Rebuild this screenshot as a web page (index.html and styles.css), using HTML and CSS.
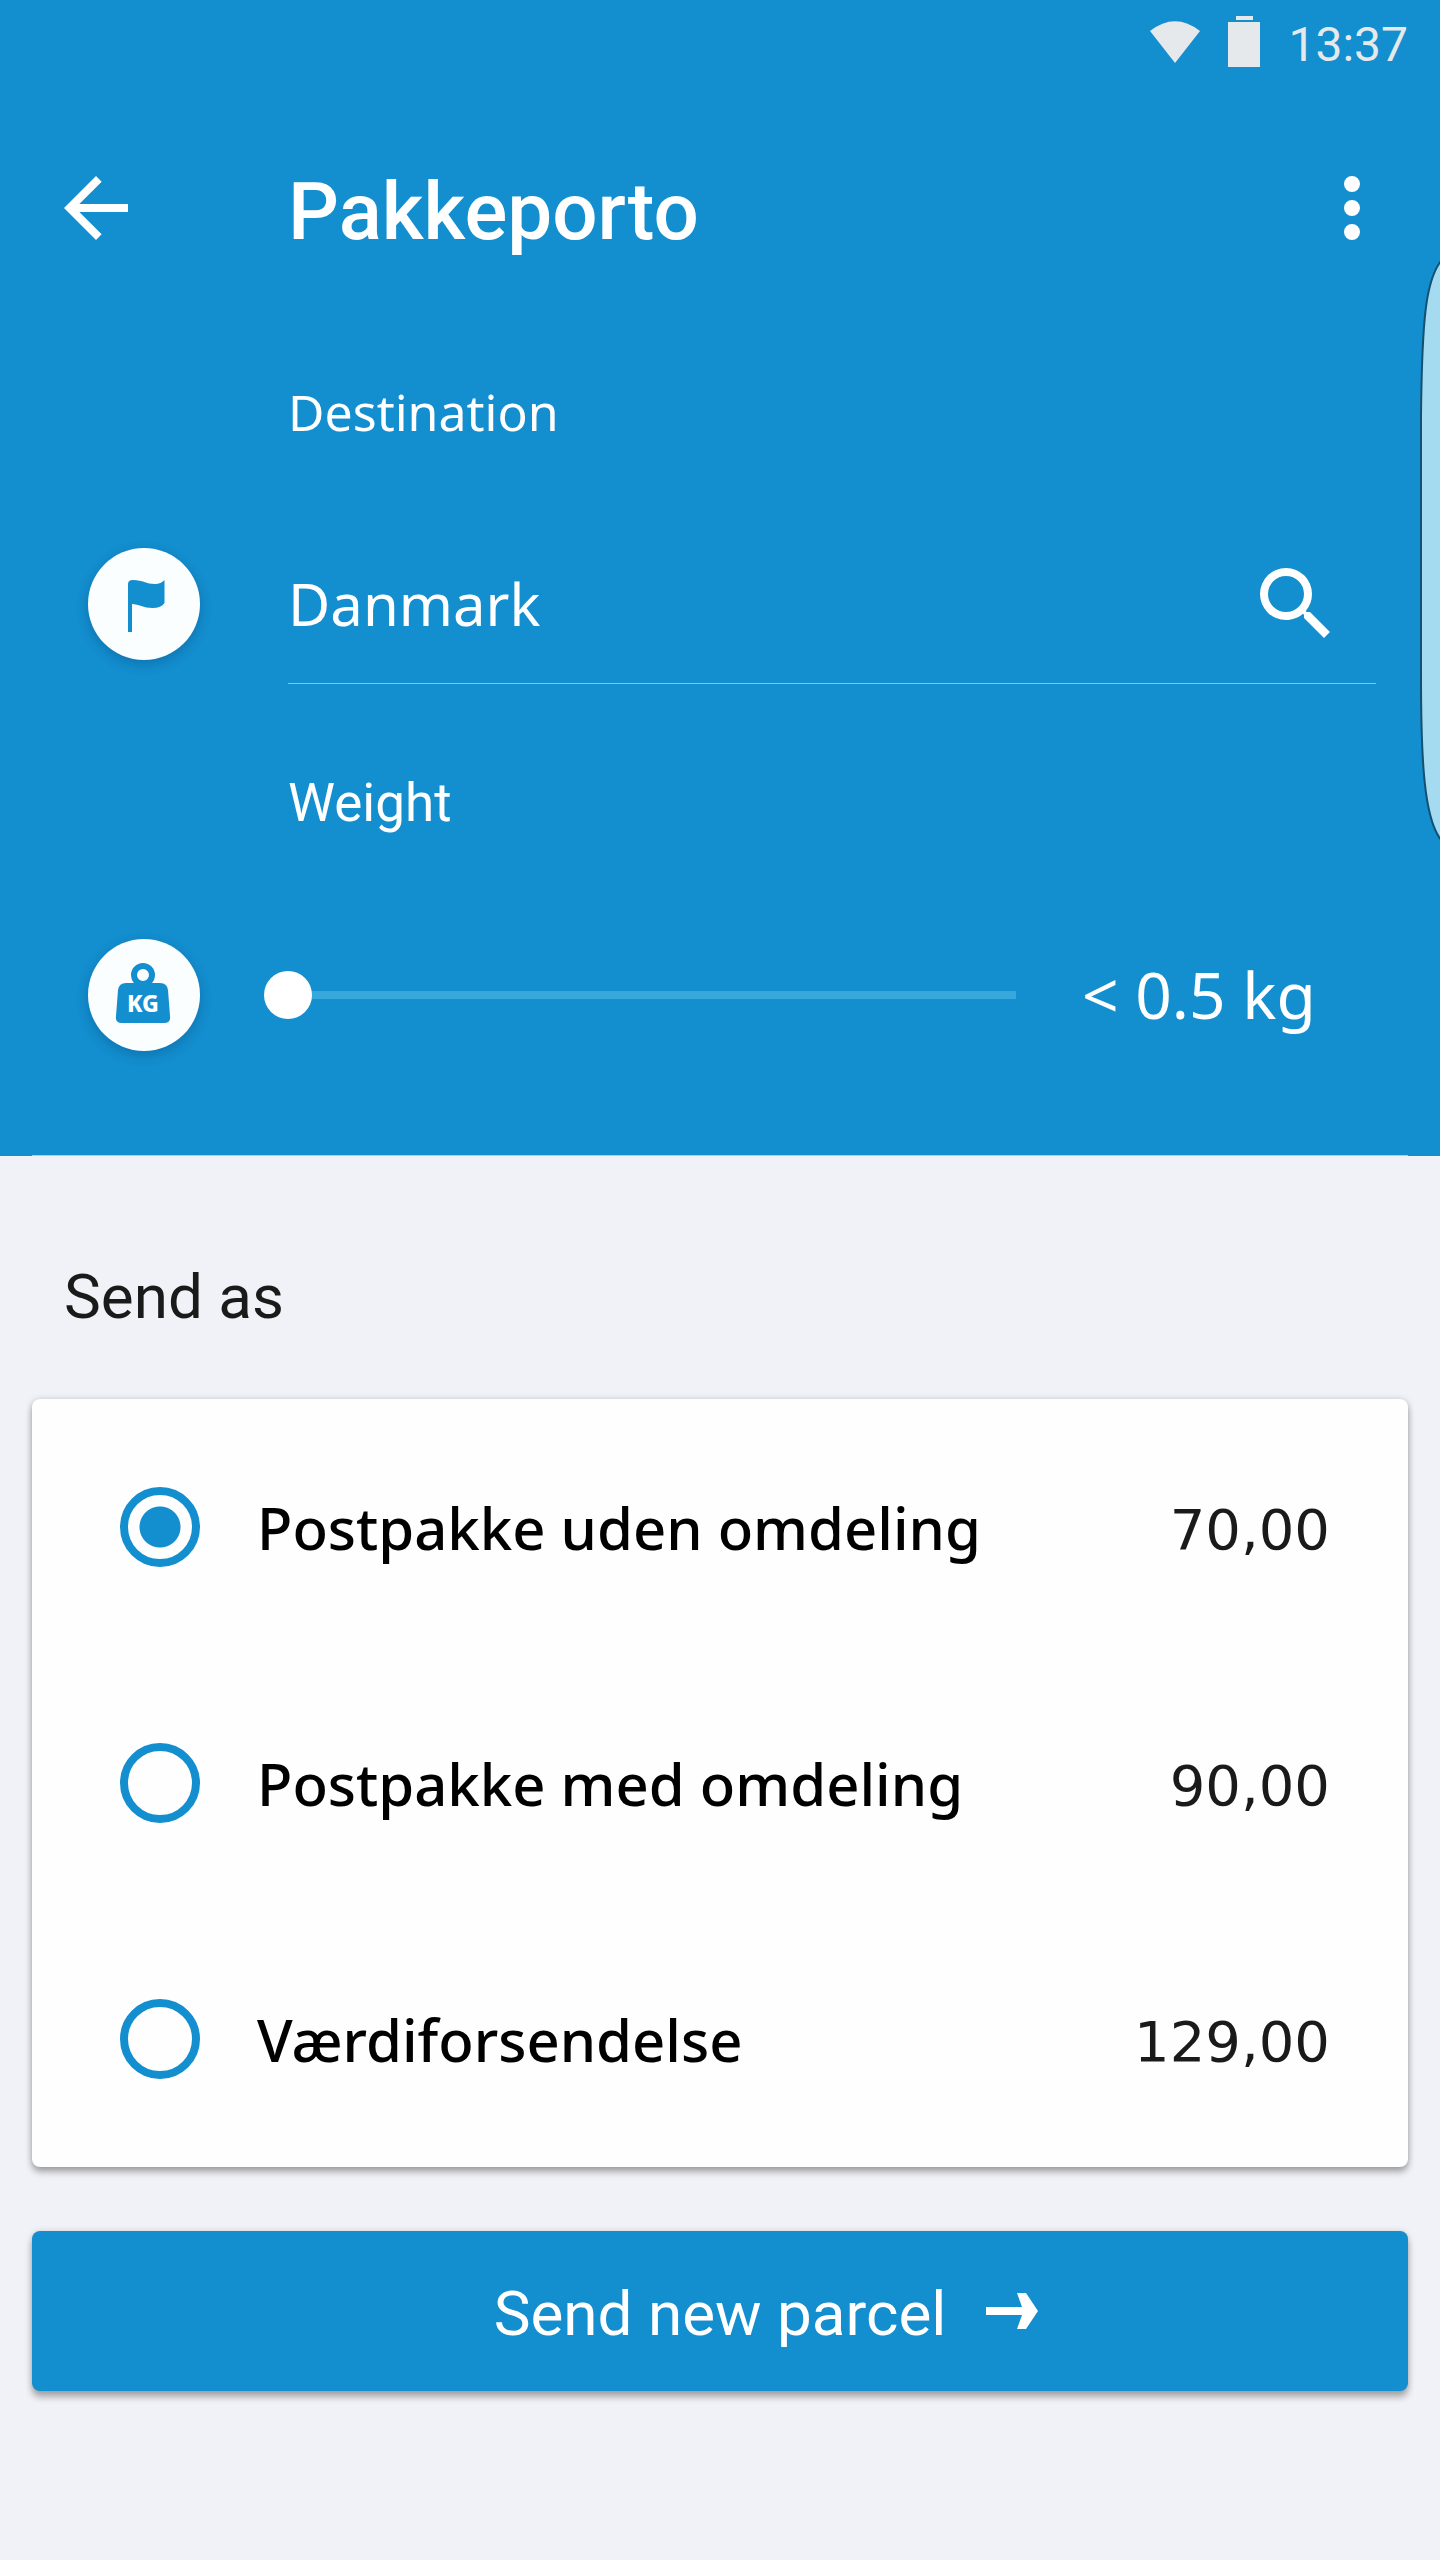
FILE: index.html
```html
<!DOCTYPE html>
<html lang="da">
<head>
  <meta charset="utf-8">
  <meta name="viewport" content="width=device-width, initial-scale=1">
  <title>Pakkeporto</title>
  <link rel="stylesheet" href="styles.css">
</head>
<body>
  <header class="top">
    <div class="status">
      <svg class="wifi" viewBox="0 0 50 42" aria-hidden="true"><path d="M0 10Q25-9.500 50 10L25 42Z"/></svg>
      <svg class="battery" viewBox="0 0 32 52" aria-hidden="true"><path d="M8 0h17v4H8zM0 6h32v45H0z"/></svg>
      <time class="clock">13:37</time>
    </div>

    <div class="appbar">
      <button class="icon-button" type="button" aria-label="Back">
        <svg viewBox="0 0 24 24"><path d="M20 11H7.830l5.590-5.590L12 4l-8 8 8 8 1.410-1.410L7.830 13H20v-2z"/></svg>
      </button>
      <h1 class="title">Pakkeporto</h1>
      <button class="icon-button" type="button" aria-label="More options">
        <svg viewBox="0 0 24 24"><path d="M12 8a2 2 0 1 0 0-4 2 2 0 0 0 0 4zm0 2a2 2 0 1 0 0 4 2 2 0 0 0 0-4zm0 6a2 2 0 1 0 0 4 2 2 0 0 0 0-4z"/></svg>
      </button>
    </div>

    <form class="fields">
      <label class="label label-destination" for="destination">Destination</label>
      <div class="row">
        <span class="badge">
          <svg viewBox="0 0 112 112" aria-hidden="true"><path d="M40 84V36q0-4 5-4c10 0 13 4 22 4q6 0 9.500-4v23q-3 5-12 5c-9 0-14-4-20.500-4v28z"/></svg>
        </span>
        <div class="search">
          <input class="search-input" id="destination" type="text" value="Danmark">
          <button class="icon-button" type="button" aria-label="Search">
            <svg viewBox="0 0 24 24"><path d="M15.500 14h-.79l-.28-.27A6.470 6.470 0 0 0 16 9.500 6.500 6.500 0 1 0 9.500 16c1.610 0 3.090-.59 4.230-1.570l.27.28v.79l5 4.990L20.490 19l-4.990-5zm-6 0a4.500 4.500 0 1 1 0-9 4.500 4.500 0 0 1 0 9z"/></svg>
          </button>
        </div>
      </div>

      <label class="label label-weight" for="weight">Weight</label>
      <div class="row">
        <span class="badge">
          <svg viewBox="0 0 112 112" aria-hidden="true">
            <circle class="ring" cx="55" cy="36" r="9"/>
            <path d="M38 44h34q7 0 8 7l2 26q1 7-6 7H34q-7 0-6-7l2-26q1-7 8-7z"/>
            <text class="kg" x="55" y="73">KG</text>
          </svg>
        </span>
        <input class="slider" id="weight" type="range" min="0" max="20" step="1" value="0">
        <output class="amount" for="weight">&lt; 0.5 kg</output>
      </div>
    </form>

    <svg class="edge-tab" viewBox="0 0 20 588" aria-hidden="true"><path d="M21 5C6 24 2 62 1 160V420C1 505 4 562 21 584"/></svg>
  </header>

  <main class="content">
    <h2 class="heading" id="send-as">Send as</h2>
    <div class="card" role="radiogroup" aria-labelledby="send-as">
      <label class="option">
        <input class="radio" type="radio" name="service" checked>
        <span class="name">Postpakke uden omdeling</span>
        <span class="price">70,00</span>
      </label>
      <label class="option">
        <input class="radio" type="radio" name="service">
        <span class="name">Postpakke med omdeling</span>
        <span class="price">90,00</span>
      </label>
      <label class="option">
        <input class="radio" type="radio" name="service">
        <span class="name">Værdiforsendelse</span>
        <span class="price">129,00</span>
      </label>
    </div>

    <button class="send" type="button">
      <span class="send-text">Send new parcel</span>
      <svg class="send-arrow" viewBox="0 0 52 36" aria-hidden="true"><path d="M0 14H36L31 0H40L52 18 40 36H31L36 22H0Z"/></svg>
    </button>
  </main>
</body>
</html>
```
FILE: styles.css
```css
:root {
  --blue: #138ecf;
  --page: #f1f2f7;
}

* {
  box-sizing: border-box;
}

body {
  margin: 0;
  min-height: 100vh;
  background: var(--page);
  font-family: Roboto, sans-serif;
}

button,
input {
  margin: 0;
  border: 0;
  padding: 0;
  background: none;
  color: inherit;
  font: inherit;
}

/* Header */
.top {
  position: relative;
  padding-bottom: 81px;
  background: var(--blue);
  color: #fff;
}

.top::after {
  content: "";
  position: absolute;
  right: 32px;
  bottom: 0;
  left: 32px;
  height: 1px;
  background: #a0d2ec;
}

.status {
  display: flex;
  align-items: center;
  justify-content: flex-end;
  height: 96px;
  padding: 0 32px 12px;
  color: #e6e9eb;
}

.status svg {
  fill: currentColor;
}

.wifi {
  width: 50px;
  height: 42px;
  margin-right: 28px;
}

.battery {
  width: 32px;
  height: 52px;
  margin-right: 28px;
}

.clock {
  padding-top: 6px;
  font-size: 48px;
  line-height: 56px;
}

.appbar {
  display: flex;
  align-items: center;
  height: 224px;
  padding: 0 40px 0 48px;
}

.icon-button {
  flex: none;
  width: 96px;
  height: 96px;
}

.icon-button svg {
  display: block;
  width: 100%;
  height: 100%;
  fill: currentColor;
}

.title {
  flex: 1;
  margin: 0;
  padding: 8px 0 0 144px;
  font-size: 80px;
  font-weight: 500;
  line-height: 96px;
}

.label {
  display: block;
  margin: 0 0 80px 288px;
  line-height: 64px;
}

.label-destination {
  padding-top: 60px;
  font-family: "Noto Sans", sans-serif;
  font-size: 50px;
}

.label-weight {
  padding-top: 87px;
  font-size: 53px;
}

.row {
  display: flex;
  align-items: center;
  height: 160px;
  padding-left: 88px;
}

.badge {
  flex: none;
  width: 112px;
  height: 112px;
  border-radius: 50%;
  background: #fbfeff;
  box-shadow: 0 4px 12px rgba(0, 40, 80, 0.25);
}

.badge svg {
  display: block;
  fill: var(--blue);
}

.badge .ring {
  fill: none;
  stroke: var(--blue);
  stroke-width: 6px;
}

.badge .kg {
  fill: #fff;
  font-family: "Noto Sans", sans-serif;
  font-size: 23px;
  font-weight: 800;
  text-anchor: middle;
}

.search {
  display: flex;
  flex: 1;
  align-items: center;
  align-self: stretch;
  margin: 0 64px 0 88px;
  border-bottom: 1px solid #7cc6ea;
  padding-right: 32px;
}

.search-input {
  flex: 1;
  min-width: 0;
  height: 96px;
  outline: 0;
  font-family: "Noto Sans", sans-serif;
  font-size: 58px;
}

.slider {
  flex: 1;
  min-width: 0;
  height: 48px;
  margin-left: 64px;
  appearance: none;
  background: linear-gradient(#37a8dc, #37a8dc) center / calc(100% - 48px) 8px no-repeat;
}

.slider::-webkit-slider-thumb {
  appearance: none;
  width: 48px;
  height: 48px;
  border-radius: 50%;
  background: #fff;
}

.slider::-moz-range-thumb {
  width: 48px;
  height: 48px;
  border: 0;
  border-radius: 50%;
  background: #fff;
}

.amount {
  flex: none;
  width: 400px;
  padding-left: 42px;
  font-family: "Noto Sans", sans-serif;
  font-size: 64px;
  line-height: 80px;
  white-space: nowrap;
}

/* Handle of the edge panel, over the right side of the screen */
.edge-tab {
  position: absolute;
  top: 256px;
  right: 0;
  width: 20px;
  height: 588px;
  fill: #a5dbf0;
  stroke: #14506f;
  stroke-width: 2px;
}

/* Services */
.content {
  padding: 105px 32px 168px;
}

.heading {
  margin: 0 32px 66px;
  color: #1a1a1a;
  font-size: 62px;
  font-weight: 400;
  line-height: 72px;
}

.card {
  border-radius: 8px;
  background: #fefefe;
  box-shadow: 0 5px 7px rgba(0, 0, 0, 0.3), 0 0 6px rgba(0, 0, 0, 0.15);
}

.option {
  display: flex;
  align-items: center;
  height: 256px;
  padding: 0 78px 0 88px;
}

.radio {
  flex: none;
  width: 80px;
  height: 80px;
  margin-right: 57px;
  border: 8px solid var(--blue);
  border-radius: 50%;
  appearance: none;
}

.radio:checked {
  background: radial-gradient(circle, var(--blue) 20px, transparent 21px);
}

.name {
  flex: 1;
  color: #000;
  font-family: "Noto Sans", sans-serif;
  font-size: 58px;
  font-weight: 500;
}

.price {
  padding-top: 4px;
  color: #1a1a1a;
  font-family: "DejaVu Sans", sans-serif;
  font-size: 56px;
}

.send {
  display: flex;
  align-items: center;
  justify-content: center;
  gap: 40px;
  width: 100%;
  height: 160px;
  margin-top: 64px;
  border-radius: 8px;
  padding-left: 92px;
  background: var(--blue);
  box-shadow: 0 6px 7px rgba(0, 0, 0, 0.3), 0 0 6px rgba(0, 0, 0, 0.12);
  color: #fff;
  font-size: 62px;
}

.send-text {
  padding-top: 4px;
}

.send-arrow {
  width: 52px;
  height: 36px;
  fill: currentColor;
}
```
